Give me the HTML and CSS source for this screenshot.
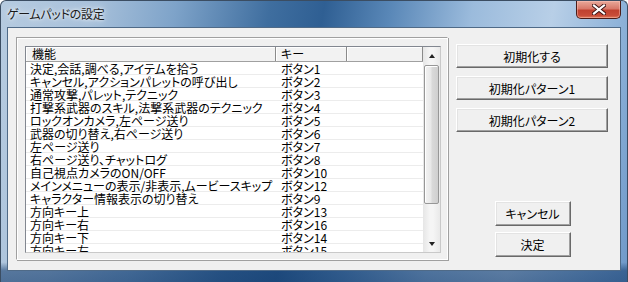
FILE: index.html
```html
<!DOCTYPE html>
<html>
	<head>
		<meta charset="utf-8">
		<title>ゲームパッドの設定</title>
		<link rel="stylesheet" href="styles.css">
	</head>
	<body>
		<div class="window">
			<div class="titlebar">
				<span class="title">ゲームパッドの設定</span>
				<div class="close">
					<svg width="14" height="11" viewBox="0 0 14 11">
						<path d="M2 1.5 L12 9.5 M12 1.5 L2 9.5" stroke="#3a1010" stroke-width="4" stroke-linecap="square"/>
						<path d="M2 1.5 L12 9.5 M12 1.5 L2 9.5" stroke="#fff" stroke-width="2.2" stroke-linecap="square"/>
					</svg>
				</div>
			</div>
			<div class="client">
				<div class="panel">
					<div class="listview">
						<div class="lv-body">
							<div class="lv-header">
								<div class="hd hd-func">機能</div>
								<div class="hd hd-key">キー</div>
								<div class="hd hd-rest"></div>
							</div>
							<div class="lv-row"><span class="c-func">決定,会話,調べる,アイテムを拾う</span><span class="c-key">ボタン1</span></div>
							<div class="lv-row"><span class="c-func">キャンセル,アクションパレットの呼び出し</span><span class="c-key">ボタン2</span></div>
							<div class="lv-row"><span class="c-func">通常攻撃,パレット,テクニック</span><span class="c-key">ボタン3</span></div>
							<div class="lv-row"><span class="c-func">打撃系武器のスキル,法撃系武器のテクニック</span><span class="c-key">ボタン4</span></div>
							<div class="lv-row"><span class="c-func">ロックオンカメラ,左ページ送り</span><span class="c-key">ボタン5</span></div>
							<div class="lv-row"><span class="c-func">武器の切り替え,右ページ送り</span><span class="c-key">ボタン6</span></div>
							<div class="lv-row"><span class="c-func">左ページ送り</span><span class="c-key">ボタン7</span></div>
							<div class="lv-row"><span class="c-func">右ページ送り、チャットログ</span><span class="c-key">ボタン8</span></div>
							<div class="lv-row"><span class="c-func">自己視点カメラのON/OFF</span><span class="c-key">ボタン10</span></div>
							<div class="lv-row"><span class="c-func">メインメニューの表示/非表示,ムービースキップ</span><span class="c-key">ボタン12</span></div>
							<div class="lv-row"><span class="c-func">キャラクター情報表示の切り替え</span><span class="c-key">ボタン9</span></div>
							<div class="lv-row"><span class="c-func">方向キー上</span><span class="c-key">ボタン13</span></div>
							<div class="lv-row"><span class="c-func">方向キー右</span><span class="c-key">ボタン16</span></div>
							<div class="lv-row"><span class="c-func">方向キー下</span><span class="c-key">ボタン14</span></div>
							<div class="lv-row"><span class="c-func">方向キー左</span><span class="c-key">ボタン15</span></div>
						</div>
						<div class="scrollbar">
							<div class="sb-arrow"><span class="tri-up"></span></div>
							<div class="sb-thumb"></div>
							<div class="sb-track"></div>
							<div class="sb-arrow"><span class="tri-down"></span></div>
						</div>
					</div>
				</div>
				<div class="side">
					<button class="btn btn-wide">初期化する</button>
					<button class="btn btn-wide">初期化パターン1</button>
					<button class="btn btn-wide">初期化パターン2</button>
					<div class="side-fill"></div>
					<button class="btn btn-small">キャンセル</button>
					<button class="btn btn-small">決定</button>
				</div>
			</div>
		</div>
	</body>
</html>
```

FILE: styles.css
```css
* {
	margin: 0;
	padding: 0;
	box-sizing: border-box;
}

body {
	font-family: "Noto Sans CJK JP", "Liberation Sans", sans-serif;
	font-size: 12px;
	font-feature-settings: "palt";
	color: #000;
	background: #fff;
}

.window {
	width: 628px;
	height: 282px;
	display: flex;
	flex-direction: column;
	border: 1px solid #3b4d62;
	border-bottom: none;
	border-radius: 6px 6px 0 0;
	background:
		linear-gradient(to bottom, rgba(255,255,255,0) 0%, rgba(255,255,255,0) 93%, rgba(15,55,105,0.55) 96%, rgba(15,55,105,0.6) 100%),
		linear-gradient(100deg, #b6cbe0 0%, #a7c0da 14%, #7ea3c9 26%, #3f6e9f 40%, #2f5f93 48%, #5a88b8 58%, #9bbbdc 70%, #b8cfe7 82%, #8fb3d9 92%, #6e98c8 100%);
}

/* 标题栏 */
.titlebar {
	height: 27px;
	flex: none;
	display: flex;
	justify-content: space-between;
	align-items: flex-start;
}

.titlebar .title {
	padding: 6px 0 0 6px;
	font-size: 12px;
	line-height: 14px;
	letter-spacing: -0.3px;
	color: #1a1a1a;
	text-shadow: 0 0 6px rgba(255,255,255,0.9), 0 0 3px rgba(255,255,255,0.8);
}

.titlebar .close {
	width: 45px;
	height: 18px;
	margin-right: 6px;
	border: 1px solid #4b1c18;
	border-top: none;
	border-radius: 0 0 5px 5px;
	background: linear-gradient(to bottom, #e9a99a 0%, #d8796a 45%, #c0412f 55%, #c84c38 85%, #e07a5a 100%);
	box-shadow: inset 0 0 0 1px rgba(255,200,190,0.45);
	display: flex;
	align-items: center;
	justify-content: center;
}

/* 客户区 */
.client {
	height: 242px;
	margin: 0 7px;
	flex: none;
	display: flex;
	background: #f0f0f0;
	box-shadow: 0 0 0 1px #4f6a87;
}

.panel {
	width: 432px;
	height: 223px;
	margin: 9px 0 0 8px;
	padding: 8px 6px 6px 8px;
	border: 1px solid #a0a0a0;
	border-right-color: #fff;
	border-bottom-color: #fff;
	box-shadow: inset 1px 1px 0 #fff, 1px 1px 0 #a0a0a0;
	background: #f0f0f0;
}

.listview {
	width: 416px;
	height: 207px;
	display: flex;
	border: 1px solid #828790;
	border-right-color: #c9c9c9;
	border-bottom-color: #c9c9c9;
	background: #fff;
}

.lv-body {
	flex: 1;
	overflow: hidden;
}

.lv-header {
	height: 15px;
	display: grid;
	grid-template-columns: 250px 71px 1fr;
	border-bottom: 1px solid #a0a0a0;
	background: #f2f2f2;
}

.lv-header .hd {
	line-height: 14px;
	padding-left: 5px;
	border-right: 1px solid #8a8a8a;
	box-shadow: inset 1px 1px 0 #fff;
}

.lv-header .hd-func {
	padding-left: 6px;
}

.lv-row {
	height: 13px;
	display: grid;
	grid-template-columns: 250px 1fr;
	background: linear-gradient(to top, #ececec 1px, #fff 1px);
	line-height: 13px;
	white-space: nowrap;
}

.lv-row .c-func {
	padding-left: 4px;
}

.lv-row .c-key {
	padding-left: 5px;
}

/* 滚动条 */
.scrollbar {
	width: 17px;
	flex: none;
	display: flex;
	flex-direction: column;
	background: linear-gradient(to right, #e6e6e6, #f5f5f5 40%, #f5f5f5 60%, #e9e9e9);
}

.sb-arrow {
	height: 17px;
	display: flex;
	align-items: center;
	justify-content: center;
}

.tri-up {
	width: 0;
	height: 0;
	border-left: 3.5px solid transparent;
	border-right: 3.5px solid transparent;
	border-bottom: 4px solid #222;
}

.tri-down {
	width: 0;
	height: 0;
	border-left: 3.5px solid transparent;
	border-right: 3.5px solid transparent;
	border-top: 4px solid #222;
}

.sb-thumb {
	height: 139px;
	margin: 1px 1px 0 1px;
	border: 1px solid #979797;
	border-radius: 2px;
	background: linear-gradient(to right, #f3f3f3 0%, #e8e8e8 45%, #d9d9d9 55%, #cfcfcf 100%);
	box-shadow: inset 1px 1px 0 #fff;
}

.sb-track {
	flex: 1;
}

/* 右侧按钮 */
.side {
	width: 152px;
	margin-left: 8px;
	padding: 16px 0 13px 0;
	display: flex;
	flex-direction: column;
	align-items: center;
}

.btn {
	font-family: inherit;
	font-size: 12px;
	font-feature-settings: "palt";
	color: #000;
	background: #f0f0f0;
	border: 1px solid;
	border-color: #fff #696969 #696969 #fff;
	box-shadow: inset -1px -1px 0 #a0a0a0, inset 1px 1px 0 #e3e3e3;
	flex: none;
}

.btn-wide {
	width: 152px;
	height: 24px;
	margin-bottom: 8px;
}

.btn-small {
	width: 76px;
	height: 25px;
	margin-left: 1px;
}

.btn-small + .btn-small {
	margin-top: 6px;
}

.side-fill {
	flex: 1;
}
```
